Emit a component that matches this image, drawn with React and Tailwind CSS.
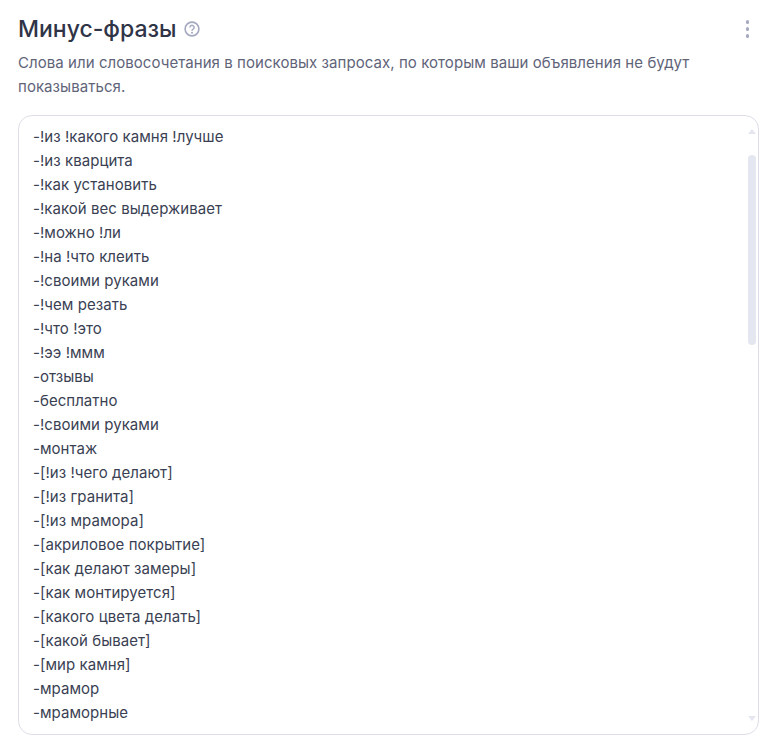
const phrases = [
  '-!из !какого камня !лучше',
  '-!из кварцита',
  '-!как установить',
  '-!какой вес выдерживает',
  '-!можно !ли',
  '-!на !что клеить',
  '-!своими руками',
  '-!чем резать',
  '-!что !это',
  '-!ээ !ммм',
  '-отзывы',
  '-бесплатно',
  '-!своими руками',
  '-монтаж',
  '-[!из !чего делают]',
  '-[!из гранита]',
  '-[!из мрамора]',
  '-[акриловое покрытие]',
  '-[как делают замеры]',
  '-[как монтируется]',
  '-[какого цвета делать]',
  '-[какой бывает]',
  '-[мир камня]',
  '-мрамор',
  '-мраморные',
];

function HelpIcon() {
  return (
    <svg width="16" height="16" viewBox="0 0 16 16" fill="none">
      <circle cx="8" cy="8" r="6.9" stroke="#a5a9c0" strokeWidth="1.6" />
      <path d="M5.9 6.4a2.1 2.1 0 1 1 3.2 1.8c-.8.4-1.1.8-1.1 1.6" stroke="#a5a9c0" strokeWidth="1.5" fill="none" />
      <circle cx="8" cy="11.7" r="1" fill="#a5a9c0" />
    </svg>
  );
}

export default function App() {
  return (
    <div className="w-[773px] h-[740px] overflow-hidden bg-white pl-[18px] pr-[14px] pt-[14px] font-['Inter',sans-serif]">
      <div className="flex items-start justify-between">
        <div className="flex items-center gap-[7px]">
          <h1 className="text-[23px] leading-[30px] font-medium text-[#2f3447]">Минус-фразы</h1>
          <HelpIcon />
        </div>
        <div className="flex flex-col gap-[3.5px] pt-[6px] pr-[10px]">
          <span className="w-[3.5px] h-[3.5px] rounded-full bg-[#a5a9c0]" />
          <span className="w-[3.5px] h-[3.5px] rounded-full bg-[#a5a9c0]" />
          <span className="w-[3.5px] h-[3.5px] rounded-full bg-[#a5a9c0]" />
        </div>
      </div>
      <p className="mt-[7px] w-[700px] text-[15px] leading-[24px] tracking-[0.06px] text-[#5f6479]">
        Слова или словосочетания в поисковых запросах, по которым ваши объявления не будут показываться.
      </p>
      <div className="mt-[16px] flex w-[741px] h-[620px] rounded-[14px] border border-[#dcdde8]">
        <div className="flex-1 pl-[14px] pt-[9px]">
          {phrases.map((p, i) => (
            <div key={i} className="text-[15px] leading-[24px] tracking-[0.05px] text-[#3a3f53] whitespace-nowrap">{p}</div>
          ))}
        </div>
        <div className="flex w-[8px] mr-[2px] flex-col items-center pt-[13px] pb-[13px]">
          <div className="w-0 h-0 border-x-[4px] border-x-transparent border-b-[5px] border-b-[#e4e6f0]" />
          <div className="mt-[21px] w-[8px] h-[190px] rounded-full bg-[#e4e6f0]" />
          <div className="mt-auto w-0 h-0 border-x-[4px] border-x-transparent border-t-[5px] border-t-[#e4e6f0]" />
        </div>
      </div>
    </div>
  );
}
